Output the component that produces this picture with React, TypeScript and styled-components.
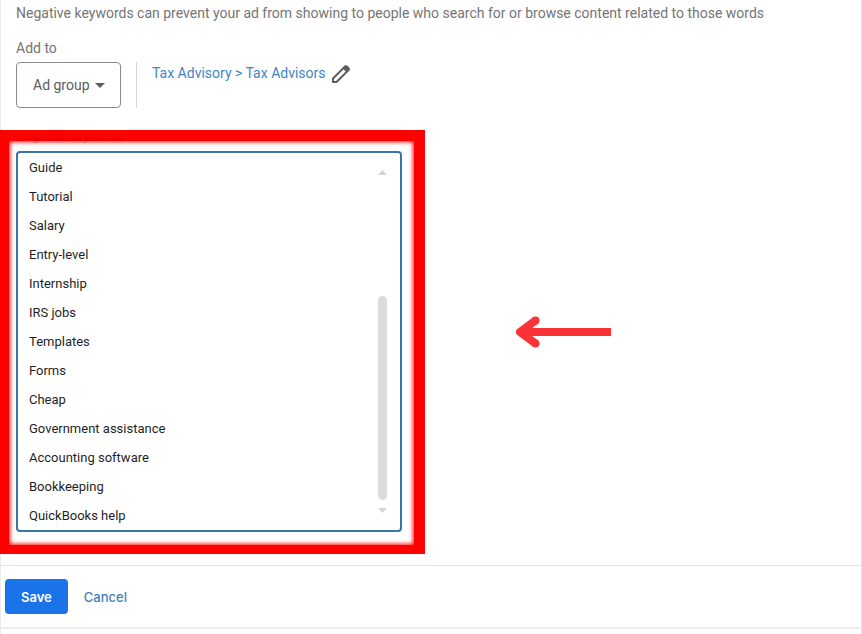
import React from "react";
import styled, { createGlobalStyle } from "styled-components";

const GlobalStyle = createGlobalStyle`
  *, *::before, *::after { box-sizing: border-box; }
  body { margin: 0; background: #fff; font-family: Roboto, "Liberation Sans", sans-serif; }
`;

const Page = styled.main`
  display: flex;
  flex-direction: column;
  min-height: 100vh;
  border-left: 1px solid #ececee;
  border-right: 1px solid #e6e6e8;
`;

const Intro = styled.section`
  display: flex;
  flex-direction: column;
  padding: 3px 15px 22px;
`;

const Description = styled.p`
  margin: 0 0 15px;
  font-size: 14px;
  line-height: 20px;
  color: #757575;
`;

const Label = styled.label`
  margin-bottom: 4px;
  font-size: 14px;
  line-height: 20px;
  color: #757575;
`;

const TargetRow = styled.div`
  display: flex;
  align-items: flex-start;
  height: 46px;
`;

const SelectBox = styled.div`
  position: relative;
  height: 46px;
  margin-right: 15px;
`;

const Select = styled.select`
  appearance: none;
  width: 105px;
  height: 46px;
  padding: 0 16px;
  border: 1px solid #8a8a8a;
  border-radius: 4px;
  background: #fff;
  font: 14px/20px Roboto, "Liberation Sans", sans-serif;
  color: #5a5c60;
`;

const SelectCaret = styled.svg`
  position: absolute;
  top: 21px;
  right: 16px;
  pointer-events: none;
`;

const Target = styled.div`
  display: flex;
  align-items: flex-start;
  height: 46px;
  padding-left: 15px;
  border-left: 1px solid #d4d4d6;
`;

const TargetLink = styled.a`
  font-size: 14px;
  line-height: 22px;
  color: #3f86c6;
  text-decoration: none;
`;

const IconButton = styled.button`
  display: flex;
  margin: 2px 0 0 5px;
  padding: 0;
  border: 0;
  background: none;
`;

const KeywordRow = styled.section`
  display: flex;
  align-items: flex-start;
`;

const Highlight = styled.div`
  flex: 0 1 425px;
  margin-left: -1px;
  padding: 2px 12px 13px 7px;
  border: solid #fd0000;
  border-width: 11px 11px 9px 9px;
  box-shadow: inset 0 0 4px 1px #fd0000;
`;

const CoveredLabel = styled.label`
  display: flex;
  align-items: flex-end;
  height: 14px;
  margin-top: -14px;
  overflow: hidden;
  font-size: 13px;
  line-height: 14px;
  color: rgba(110, 0, 0, 0.3);
  clip-path: inset(9px 0 0 0);
`;

const KeywordField = styled.div`
  position: relative;
  display: flex;
  margin-top: 8px;
`;

const KeywordInput = styled.textarea`
  flex: 1;
  min-width: 0;
  height: 381px;
  padding: 0 32px 0 11px;
  border: 2px solid #3a75a8;
  border-radius: 4px;
  outline: 0;
  resize: none;
  overflow: hidden;
  background: #fff;
  font: 13px/29px Roboto, "Liberation Sans", sans-serif;
  color: #1f1f1f;
`;

const ScrollTrack = styled.div`
  position: absolute;
  top: 19px;
  right: 15px;
  bottom: 19px;
  display: flex;
  flex-direction: column;
  align-items: center;
  width: 9px;
`;

const ScrollThumb = styled.div`
  width: 9px;
  height: 204px;
  margin: auto 0 8px;
  border-radius: 5px;
  background: #dadce0;
`;

const Arrow = styled.svg`
  flex: none;
  margin: 185px 0 0 90px;
`;

const Actions = styled.footer`
  display: flex;
  align-items: center;
  gap: 16px;
  height: 64px;
  margin-top: 11px;
  padding-left: 4px;
  border-top: 1px solid #e2e4e6;
  border-bottom: 2px solid #ebebed;
`;

const ActionButton = styled.button<{ $primary?: boolean }>`
  height: 35px;
  padding: ${(p) => (p.$primary ? "0 16px" : "0")};
  border: 0;
  border-radius: 4px;
  background: ${(p) => (p.$primary ? "#1a73e8" : "transparent")};
  color: ${(p) => (p.$primary ? "#fff" : "#3f7fbb")};
  font: ${(p) => (p.$primary ? 600 : 500)} 13px/20px Inter, Roboto, sans-serif;
`;

const keywords = [
  "Guide",
  "Tutorial",
  "Salary",
  "Entry-level",
  "Internship",
  "IRS jobs",
  "Templates",
  "Forms",
  "Cheap",
  "Government assistance",
  "Accounting software",
  "Bookkeeping",
  "QuickBooks help",
];

export default function App() {
  return (
    <>
      <GlobalStyle />
      <Page>
        <Intro>
          <Description>
            Negative keywords can prevent your ad from showing to people who search for or browse content related to
            those words
          </Description>
          <Label htmlFor="level">Add to</Label>
          <TargetRow>
            <SelectBox>
              <Select id="level" defaultValue="Ad group">
                <option>Ad group</option>
                <option>Campaign</option>
              </Select>
              <SelectCaret width="10" height="5" viewBox="0 0 10 5" aria-hidden="true">
                <path d="M0 0h10L5 5z" fill="#5c5c5c" />
              </SelectCaret>
            </SelectBox>
            <Target>
              <TargetLink href="#target">Tax Advisory &gt; Tax Advisors</TargetLink>
              <IconButton type="button" aria-label="Edit target">
                <svg width="20" height="20" viewBox="0 0 20 20" aria-hidden="true">
                  <path d="M2 18V14.500L14.300 2.200L17.800 5.700L5.500 18Z" fill="none" stroke="#5c5c5c" strokeWidth="2" strokeLinejoin="round" />
                  <path d="M11.500 4.200L14 1.700Q15.200 .600 16.400 1.700L18.300 3.600Q19.400 4.800 18.300 6L15.800 8.500Z" fill="#5c5c5c" />
                </svg>
              </IconButton>
            </Target>
          </TargetRow>
        </Intro>
        <KeywordRow>
          <Highlight>
            <CoveredLabel htmlFor="keywords">Negative keywords</CoveredLabel>
            <KeywordField>
              <KeywordInput id="keywords" spellCheck={false} defaultValue={keywords.join("\n")} />
              <ScrollTrack aria-hidden="true">
                <svg width="9" height="5" viewBox="0 0 9 5">
                  <path d="M0 5h9L4.500 0z" fill="#d2d4d6" />
                </svg>
                <ScrollThumb />
                <svg width="9" height="5" viewBox="0 0 9 5">
                  <path d="M0 0h9L4.500 5z" fill="#d2d4d6" />
                </svg>
              </ScrollTrack>
            </KeywordField>
          </Highlight>
          <Arrow width="96" height="34" viewBox="0 0 96 34" aria-hidden="true">
            <path d="M96 17H6M20.500 5.500L5 17L20.500 28.500" fill="none" stroke="#fb3336" strokeWidth="8" strokeLinejoin="round" />
            <circle cx="20.500" cy="5.500" r="4" fill="#fb3336" />
            <circle cx="20.500" cy="28.500" r="4" fill="#fb3336" />
          </Arrow>
        </KeywordRow>
        <Actions>
          <ActionButton type="button" $primary>
            Save
          </ActionButton>
          <ActionButton type="button">Cancel</ActionButton>
        </Actions>
      </Page>
    </>
  );
}
